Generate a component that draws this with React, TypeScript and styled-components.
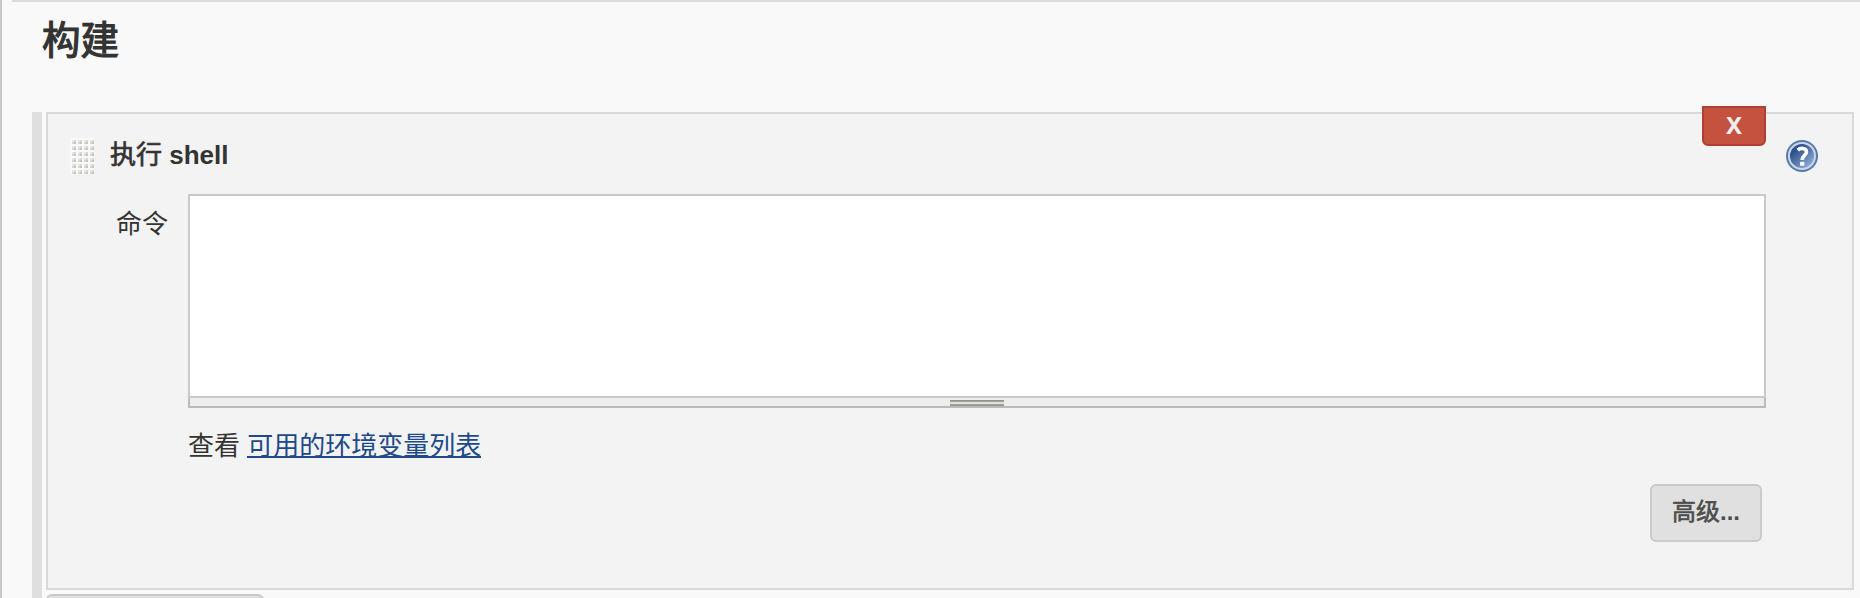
import React from "react";
import styled, { createGlobalStyle } from "styled-components";

const GlobalStyle = createGlobalStyle`
  * { box-sizing: border-box; }
  html, body { margin: 0; background: #f9f9f9; overflow: hidden; }
  body { font: 26px/32px "Liberation Sans", "Noto Sans CJK SC", sans-serif; color: #333; }
`;

const Page = styled.main`
  height: 598px;
  overflow: hidden;
  border-left: 2px solid #c8c8c8;
  padding-left: 10px;
`;

const Section = styled.section`
  border-top: 2px solid #dcdcdc;
  height: 598px;
`;

const Medium = styled.span<{ $stroke: number }>`
  font-weight: 400;
  -webkit-text-stroke: ${(p) => p.$stroke}px currentColor;
`;

const Heading = styled.h1`
  margin: 0;
  height: 110px;
  padding: 11px 0 0 30px;
  font-size: 38.5px;
  line-height: 56px;
  font-weight: 700;
`;

const Steps = styled.div`
  margin-left: 20px;
  border-left: 10px solid #dfdfdf;
  padding: 0 6px 0 4px;
  height: 500px;
`;

const Card = styled.div`
  position: relative;
  height: 478px;
  border: 2px solid #d9d9d9;
  background: #f3f3f3;
  padding: 24px 34px 0 22px;
`;

const TitleRow = styled.div`
  display: flex;
  align-items: center;
  height: 36px;
`;

const Title = styled.h2`
  margin: 0 auto 0 16px;
  font-size: 26px;
  line-height: 32px;
  font-weight: 700;
  padding-bottom: 2px;
`;

const DeleteButton = styled.button`
  position: absolute;
  top: -8px;
  right: 86px;
  width: 64px;
  height: 40px;
  padding: 0 0 3px;
  border: 2px solid #b03f31;
  border-radius: 0 0 6px 6px;
  background: #c4523f;
  color: #eee;
  font: 700 24px/33px "Noto Sans", sans-serif;
`;

const FieldRow = styled.div`
  display: flex;
  margin-top: 20px;
`;

const Label = styled.label`
  width: 118px;
  padding: 14px 20px 0 0;
  text-align: right;
`;

const Editor = styled.div`
  width: 1578px;
`;

const Command = styled.textarea`
  display: block;
  width: 100%;
  height: 204px;
  border: 2px solid #c9c9c9;
  border-radius: 0;
  background: #fff;
  resize: none;
  outline: 0;
`;

const ResizeBar = styled.div`
  display: flex;
  justify-content: center;
  height: 10px;
  border: 2px solid #bbbbb5;
  border-top: 0;
  background: #ededed;
`;

const Grip = styled.div`
  width: 54px;
  height: 6px;
  margin-top: 2px;
  background: linear-gradient(#90948a 0 1px, #a0a49a 1px 2px, #dde1d8 2px 4px, #a0a49a 4px 5px, #90948a 5px 6px);
`;

const Hint = styled.p`
  margin: 20px 0 0;
  line-height: 36px;
`;

const Link = styled.a`
  color: #204a87;
  text-decoration: none;
  display: inline-block;
  height: 30px;
  line-height: 36px;
  border-bottom: 2px solid #204a87;
`;

const Actions = styled.div`
  display: flex;
  justify-content: flex-end;
  padding: 20px 4px 0 0;
`;

const Button = styled.button<{ $w: number }>`
  display: block;
  width: ${(p) => p.$w}px;
  height: 58px;
  padding: 0 0 2px;
  border: 2px solid #cacaca;
  border-radius: 6px;
  background: #e0e0e0;
  color: #4d4d4d;
  font: 700 24px/50px "Liberation Sans", "Noto Sans CJK SC", sans-serif;
`;

const AddStep = styled.div`
  margin-top: 4px;
`;

const cells = Array.from({ length: 24 }, (_, i) => [(i % 4) * 6, Math.floor(i / 4) * 6]);

const DragHandle = () => (
  <svg width="24" height="36" shapeRendering="crispEdges">
    <rect width="24" height="36" fill="#f9f9f8" />
    {cells.map(([x, y]) => (
      <g key={`${x}-${y}`}>
        <rect x={x + 2} y={y + 2} width="4" height="4" fill="#d8d8d5" />
        <rect x={x + 4} y={y + 4} width="2" height="2" fill="#c4c4c1" />
        <rect x={x + 2} y={y + 2} width="2" height="2" fill="#e6e6e4" />
      </g>
    ))}
  </svg>
);

const HelpIcon = () => (
  <svg width="32" height="32" viewBox="0 0 32 32">
    <defs>
      <linearGradient id="helpFill" x1="0.1" y1="0.1" x2="0.9" y2="1">
        <stop offset="0.2" stopColor="#2f528c" />
        <stop offset="1" stopColor="#9dbbe0" />
      </linearGradient>
    </defs>
    <circle cx="16" cy="16" r="16" fill="#587aad" />
    <circle cx="16" cy="16" r="13" fill="url(#helpFill)" stroke="#ccd7e8" strokeWidth="2" />
    <path d="M11.8 10.2C14 7.7 20.5 7.5 20.5 12C20.5 15.5 16.2 15.5 16.2 20" fill="none" stroke="#fff" strokeWidth="3.6" />
    <rect x="14" y="21.7" width="4.4" height="4" rx="1" fill="#fff" />
  </svg>
);

export default function App() {
  return (
    <>
      <GlobalStyle />
      <Page>
        <Section>
          <Heading>
            <Medium $stroke={1.2}>构建</Medium>
          </Heading>
          <Steps>
            <Card>
              <DeleteButton>X</DeleteButton>
              <TitleRow>
                <DragHandle />
                <Title>
                  <Medium $stroke={0.7}>执行</Medium> shell
                </Title>
                <HelpIcon />
              </TitleRow>
              <FieldRow>
                <Label htmlFor="command">命令</Label>
                <Editor>
                  <Command id="command" />
                  <ResizeBar>
                    <Grip />
                  </ResizeBar>
                  <Hint>
                    查看 <Link href="#">可用的环境变量列表</Link>
                  </Hint>
                  <Actions>
                    <Button $w={112}>
                      <Medium $stroke={0.6}>高级</Medium>...
                    </Button>
                  </Actions>
                </Editor>
              </FieldRow>
            </Card>
            <AddStep>
              <Button $w={218} aria-label="增加构建步骤" />
            </AddStep>
          </Steps>
        </Section>
      </Page>
    </>
  );
}
